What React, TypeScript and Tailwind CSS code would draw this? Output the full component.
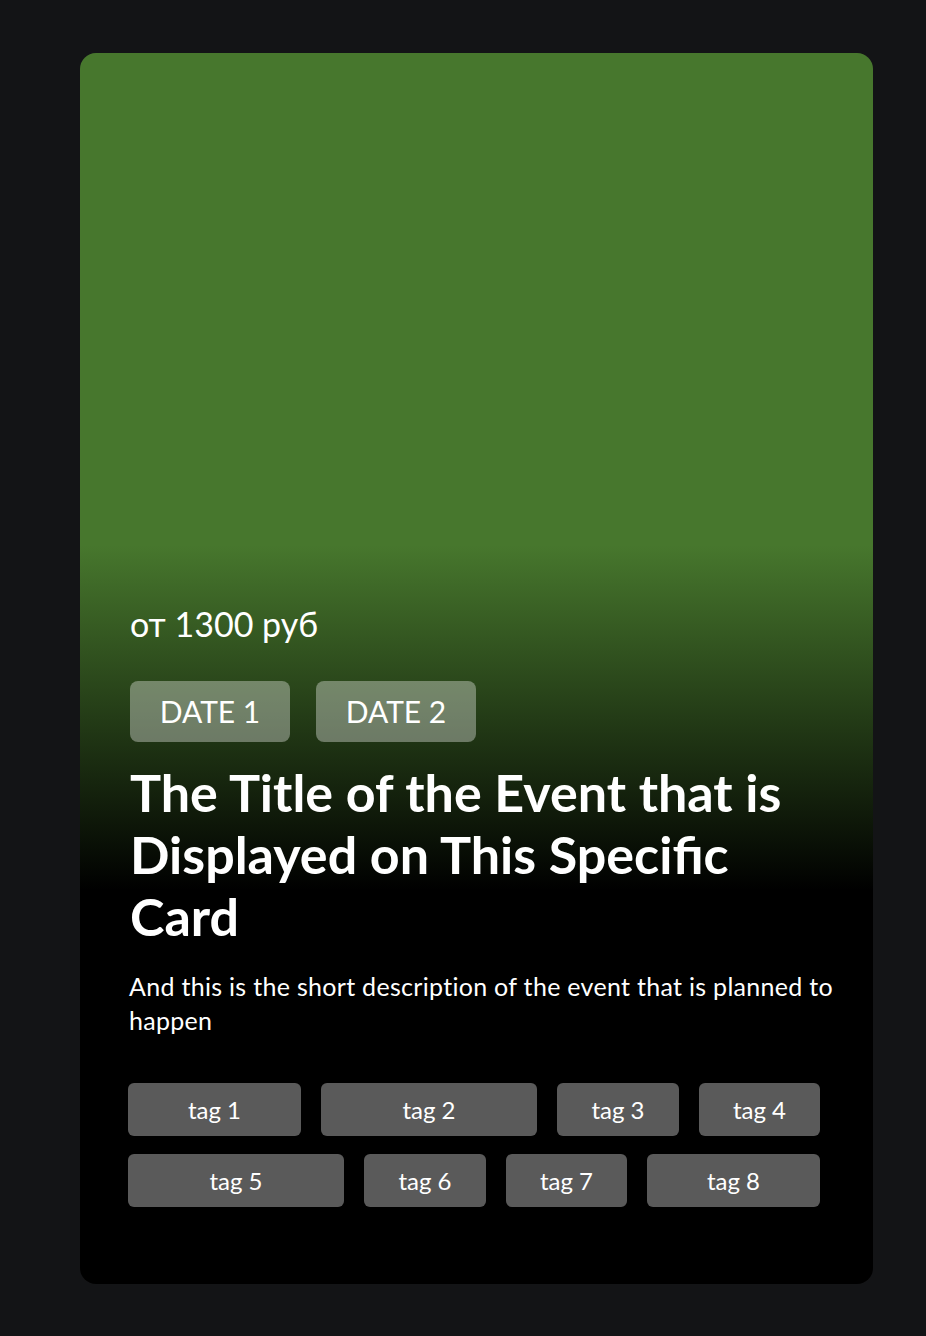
const dates = ["Date 1", "Date 2"];

const tagRows = [
  [
    { label: "tag 1", w: "w-[173px]" },
    { label: "tag 2", w: "w-[216px]" },
    { label: "tag 3", w: "w-[122px]" },
    { label: "tag 4", w: "w-[121px]" },
  ],
  [
    { label: "tag 5", w: "w-[216px]" },
    { label: "tag 6", w: "w-[122px]" },
    { label: "tag 7", w: "w-[121px]" },
    { label: "tag 8", w: "w-[173px]" },
  ],
];

export default function App() {
  return (
    <div className="min-h-[1336px] bg-[#131416] pt-[53px] px-[80px] font-['Lato',sans-serif] text-white">
      <div className="w-[793px] h-[1231px] rounded-2xl overflow-hidden flex flex-col justify-end pl-[48px] pr-[36px] pb-[77px] bg-[linear-gradient(to_bottom,#47772d_40%,#000_68%)]">
        {/* Price */}
        <p className="text-[34px] leading-none mb-[40px] pl-[2px]">от 1300 руб</p>

        {/* Dates */}
        <div className="flex gap-[26px] mb-[19px] pl-[2px]">
          {dates.map((d) => (
            <span
              key={d}
              className="w-[160px] h-[61px] rounded-lg bg-[#ffffff59] flex items-center justify-center uppercase text-[30px]"
            >
              {d}
            </span>
          ))}
        </div>

        {/* Title */}
        <h1 className="text-[52px] leading-[62px] font-bold pl-[2px] pr-[8px] mb-[22px]">
          The Title of the Event that is Displayed on This Specific Card
        </h1>

        {/* Description */}
        <p className="text-[25px] leading-[34px] tracking-[0.3px] pl-[1px] mb-[46px]">
          And this is the short description of the event that is planned to happen
        </p>

        {/* Tags */}
        <div className="flex flex-col gap-[18px]">
          {tagRows.map((row, i) => (
            <div key={i} className="flex gap-[20px]">
              {row.map((t) => (
                <span
                  key={t.label}
                  className={`${t.w} h-[53px] rounded-md bg-[#5a5a5a] flex items-center justify-center text-[24px]`}
                >
                  {t.label}
                </span>
              ))}
            </div>
          ))}
        </div>
      </div>
    </div>
  );
}
